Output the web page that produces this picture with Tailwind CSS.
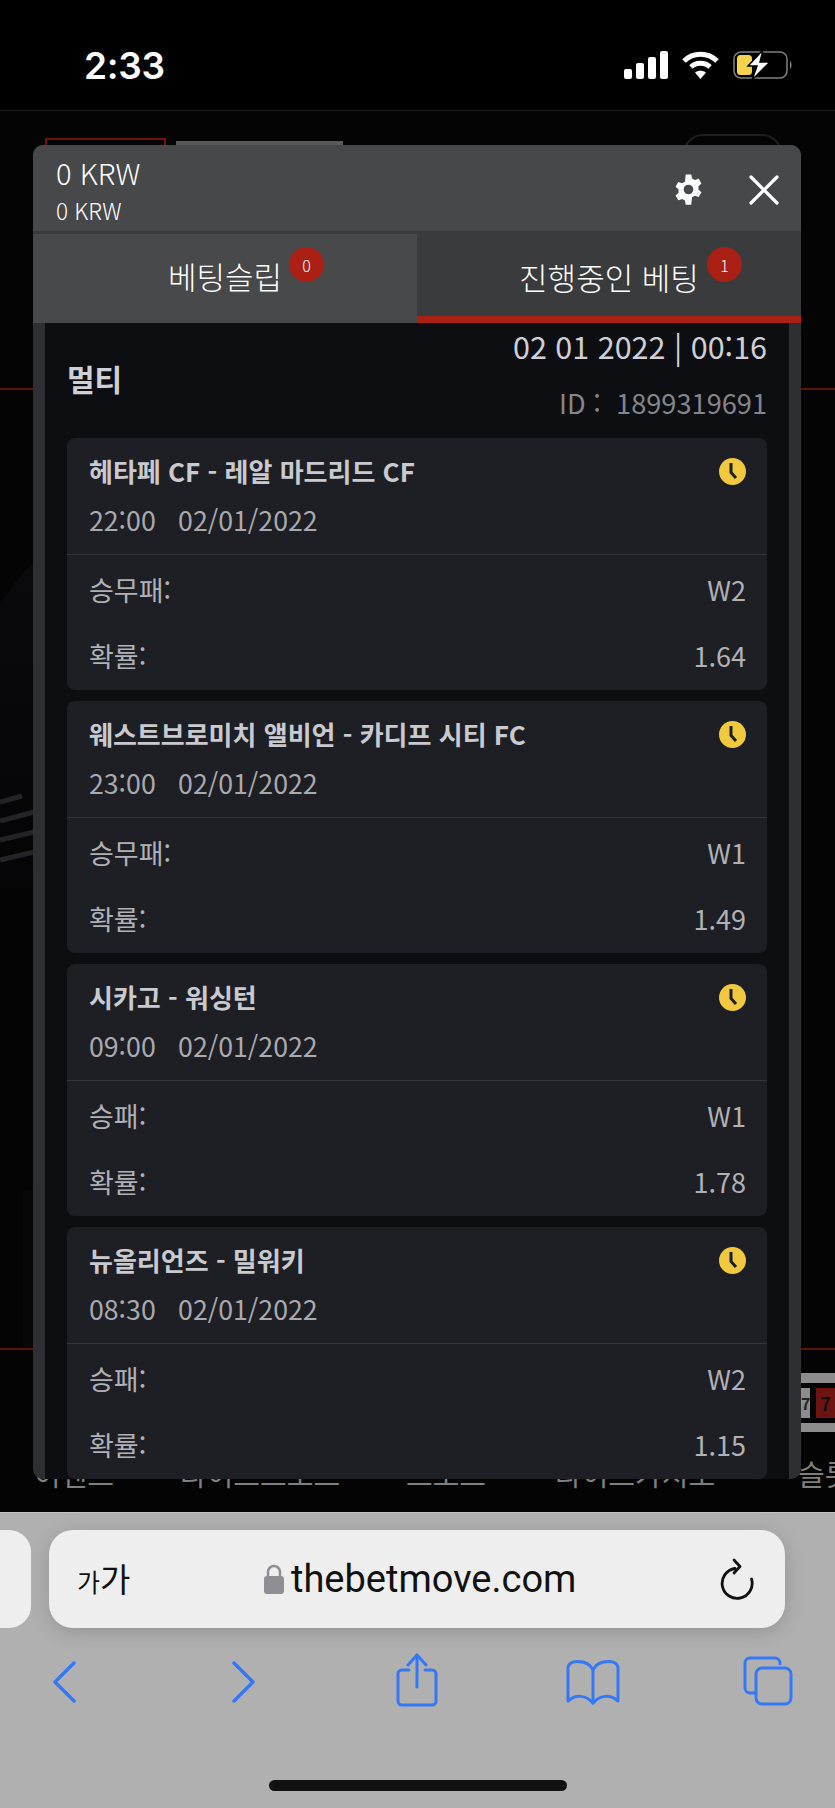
<!DOCTYPE html>
<html lang="ko">
<head>
<meta charset="utf-8">
<title>Betting slip</title>
<script src="https://cdn.jsdelivr.net/npm/@tailwindcss/browser@4"></script>
</head>
<body class="m-0 bg-black">
<div class="relative w-[835px] h-[1808px] overflow-hidden flex flex-col bg-black font-['Noto_Sans_CJK_KR','Noto_Sans',sans-serif]">

  <!-- status bar -->
  <div class="h-[110px] shrink-0 flex items-start justify-between bg-black pt-[45px] pl-[84px] pr-[42px]">
    <span class="font-['Inter',sans-serif] font-semibold text-[37px] leading-[42px] tracking-[-0.3px] text-white">2:33</span>
    <div class="flex items-start gap-[14px] pt-[6px]">
      <svg width="44" height="28" viewBox="0 0 44 28" fill="#fff"><rect x="0" y="18" width="8" height="10" rx="2"/><rect x="12" y="12" width="8" height="16" rx="2"/><rect x="24" y="6" width="8" height="22" rx="2"/><rect x="36" y="0" width="8" height="28" rx="2"/></svg>
      <svg width="37" height="28" viewBox="0 0 37 28" fill="none" stroke="#fff" stroke-width="5"><path d="M2 10 C11 1 26 1 35 10"/><path d="M9 16 C14 11 23 11 28 16"/><path d="M18.500 28 L13 21.500 C16 19 21 19 24 21.500 Z" fill="#fff" stroke="none"/></svg>
      <svg width="60" height="30" viewBox="0 0 60 30" fill="none" class="-mt-[1px]"><rect x="1" y="2" width="53" height="26" rx="7" stroke="#808080" stroke-width="1.500"/><path d="M57 11 C59 12 59 18 57 19 Z" fill="#808080"/><rect x="4" y="5" width="15" height="20" rx="3.500" fill="#f7d24c"/><path d="M30 0 L15 16 L24 16 L19 30 L37 12 L27 12 Z" fill="#fff" stroke="#000" stroke-width="1.500"/></svg>
    </div>
  </div>

  <!-- page behind the modal -->
  <div class="relative h-[1402px] shrink-0 flex flex-col bg-[#040405] border-t border-[#1b1b1b]">
    <div class="h-[277px] shrink-0 flex justify-between items-start pt-[23px] pl-[45px] pr-[53px]">
      <div class="flex items-start gap-[10px] pt-[4px]">
        <div class="w-[121px] h-[20px] border-2 border-[#6d120c]"></div>
        <div class="w-[167px] h-[20px] mt-[3px] bg-[#58585a]"></div>
      </div>
      <div class="w-[99px] h-[40px] rounded-[20px] border-2 border-[#1e1e1e]"></div>
    </div>
    <div class="h-[2px] shrink-0 bg-[#5d0f0a]"></div>
    <div class="h-[958px] shrink-0 relative overflow-hidden">
      <svg class="absolute left-0 top-[130px]" width="60" height="400" viewBox="0 0 60 400" fill="none">
        <defs><linearGradient id="sw" x1="0" y1="0" x2="0" y2="1"><stop offset="0" stop-color="#0a0a0d"/><stop offset="1" stop-color="#040405"/></linearGradient></defs>
        <path d="M0 85 C12 65 24 50 34 43 L34 400 L0 400 Z" fill="url(#sw)"/>
        <g stroke="#242428" stroke-width="5"><path d="M0 282 L22 276"/><path d="M0 301 L34 292"/><path d="M0 320 L34 312"/><path d="M0 340 L34 332"/></g>
      </svg>
      <div class="absolute left-[23px] top-[800px] w-[12px] h-[158px] bg-[#070707]"></div>
    </div>
    <div class="h-[2px] shrink-0 bg-[#5d0f0a]"></div>
    <div class="relative flex-1">
      <div class="absolute left-[801px] top-[23px] w-[34px] flex flex-col gap-[5px]">
        <div class="h-[10px] bg-[#8c8c8c]"></div>
        <div class="h-[30px] flex gap-[6px]">
          <div class="w-[9px] bg-[#8c8c8c] text-[16px] leading-[30px] font-bold text-[#222]">7</div>
          <div class="w-[19px] bg-[#6d1410] text-center text-[18px] leading-[30px] font-bold text-[#111]">7</div>
        </div>
        <div class="h-[9px] bg-[#8c8c8c]"></div>
      </div>
      <div class="absolute left-0 right-0 top-[106px] flex pl-[34px] whitespace-nowrap text-[29px] leading-[34px] text-[#7f7f7f]">
        <span class="w-[146px] shrink-0">이벤트</span><span class="w-[226px] shrink-0">라이브스포츠</span><span class="w-[149px] shrink-0">스포츠</span><span class="w-[243px] shrink-0">라이브카지노</span><span class="shrink-0">슬롯</span>
      </div>
    </div>

    <!-- modal -->
    <div class="absolute left-[33px] top-[34px] w-[768px] h-[1334px] rounded-[10px] overflow-hidden flex flex-col bg-[#2d2f33]">
      <div class="h-[86px] shrink-0 bg-[#46484a] flex items-start justify-between pl-[23px] pr-[22px] text-white">
        <div class="pt-[7px]">
          <div class="text-[29px] leading-[40px] font-light">0 KRW</div>
          <div class="text-[22.500px] leading-[30px] mt-[3px] font-light">0 KRW</div>
        </div>
        <div class="flex items-center gap-[44px] pt-[28px]">
          <svg width="33" height="33" viewBox="0 0 24 24" fill="#fff"><path fill-rule="evenodd" d="M10 1h4l.6 3a8 8 0 0 1 2 1.100l2.800-1 2 3.500-2.200 2a8 8 0 0 1 0 2.400l2.200 2-2 3.500-2.800-1a8 8 0 0 1-2 1.100L14 23h-4l-.6-3a8 8 0 0 1-2-1.100l-2.800 1-2-3.500 2.200-2a8 8 0 0 1 0-2.400l-2.200-2 2-3.500 2.800 1a8 8 0 0 1 2-1.100zM12 8.500a3.500 3.500 0 1 0 0 7 3.500 3.500 0 0 0 0-7z"/></svg>
          <svg width="30" height="30" viewBox="0 0 30 30" fill="none" stroke="#fff" stroke-width="3.200" stroke-linecap="round"><path d="M2 2 L28 28"/><path d="M28 2 L2 28"/></svg>
        </div>
      </div>
      <div class="h-[92px] shrink-0 flex bg-[#3a3b3d]">
        <div class="relative w-[384px] mt-[3px] bg-[#48494b] flex items-center justify-center text-white text-[31px] leading-[44px] font-light">
          <span class="-mt-[6px]">베팅슬립</span>
          <span class="absolute left-[256px] top-[13px] w-[35px] h-[35px] rounded-full bg-[#ab2015] flex items-center justify-center text-[16px] leading-[20px] font-light">0</span>
        </div>
        <div class="relative flex-1 border-b-[7px] border-[#ab2015] flex items-center justify-center text-white text-[31px] leading-[44px] font-light">
          <span class="pt-[6px]">진행중인 베팅</span>
          <span class="absolute left-[290px] top-[16px] w-[35px] h-[35px] rounded-full bg-[#ab2015] flex items-center justify-center text-[16px] leading-[20px] font-light">1</span>
        </div>
      </div>
      <div class="flex-1 mx-[12px] bg-[#0d0e11] pl-[22px] pr-[22px] flex flex-col min-h-0">
        <div class="h-[115px] shrink-0 flex justify-between items-start">
          <div class="mt-[35px] text-[30px] leading-[40px] font-semibold text-[#cfd0d5]">멀티</div>
          <div class="text-right">
            <div class="text-[30.500px] leading-[46px] font-normal text-[#cfd0d5]">02 01 2022 | 00:16</div>
            <div class="mt-[14px] text-[27.200px] leading-[38px] font-normal text-[#85868c]">ID :&nbsp; 1899319691</div>
          </div>
        </div>
        <div class="flex flex-col gap-[11px]">

          <div class="h-[252px] shrink-0 rounded-[8px] bg-[#1e1f24]">
            <div class="h-[117px] border-b border-[#34353a] pl-[22px] pr-[21px]">
              <div class="h-[66px] flex items-center justify-between">
                <span class="text-[26px] leading-[34px] font-semibold text-[#c9cad0]">헤타페 CF - 레알 마드리드 CF</span>
                <svg width="27" height="27" viewBox="0 0 27 27"><circle cx="13.500" cy="13.500" r="13.500" fill="#f0c93f"/><path d="M12 5 V14.500 L17 20" fill="none" stroke="#1e1f24" stroke-width="3"/></svg>
              </div>
              <div class="h-[32px] flex items-center text-[26.700px] leading-[32px] font-normal text-[#a9aab0]">22:00&nbsp;&nbsp; 02/01/2022</div>
            </div>
            <div class="pt-[2px] pl-[22px] pr-[21px] text-[27px] leading-[36px] font-normal text-[#b0b1b7]">
              <div class="h-[66px] flex items-center justify-between"><span>승무패:</span><span>W2</span></div>
              <div class="h-[66px] flex items-center justify-between"><span>확률:</span><span>1.64</span></div>
            </div>
          </div>

          <div class="h-[252px] shrink-0 rounded-[8px] bg-[#1e1f24]">
            <div class="h-[117px] border-b border-[#34353a] pl-[22px] pr-[21px]">
              <div class="h-[66px] flex items-center justify-between">
                <span class="text-[26px] leading-[34px] font-semibold text-[#c9cad0]">웨스트브로미치 앨비언 - 카디프 시티 FC</span>
                <svg width="27" height="27" viewBox="0 0 27 27"><circle cx="13.500" cy="13.500" r="13.500" fill="#f0c93f"/><path d="M12 5 V14.500 L17 20" fill="none" stroke="#1e1f24" stroke-width="3"/></svg>
              </div>
              <div class="h-[32px] flex items-center text-[26.700px] leading-[32px] font-normal text-[#a9aab0]">23:00&nbsp;&nbsp; 02/01/2022</div>
            </div>
            <div class="pt-[2px] pl-[22px] pr-[21px] text-[27px] leading-[36px] font-normal text-[#b0b1b7]">
              <div class="h-[66px] flex items-center justify-between"><span>승무패:</span><span>W1</span></div>
              <div class="h-[66px] flex items-center justify-between"><span>확률:</span><span>1.49</span></div>
            </div>
          </div>

          <div class="h-[252px] shrink-0 rounded-[8px] bg-[#1e1f24]">
            <div class="h-[117px] border-b border-[#34353a] pl-[22px] pr-[21px]">
              <div class="h-[66px] flex items-center justify-between">
                <span class="text-[26px] leading-[34px] font-semibold text-[#c9cad0]">시카고 - 워싱턴</span>
                <svg width="27" height="27" viewBox="0 0 27 27"><circle cx="13.500" cy="13.500" r="13.500" fill="#f0c93f"/><path d="M12 5 V14.500 L17 20" fill="none" stroke="#1e1f24" stroke-width="3"/></svg>
              </div>
              <div class="h-[32px] flex items-center text-[26.700px] leading-[32px] font-normal text-[#a9aab0]">09:00&nbsp;&nbsp; 02/01/2022</div>
            </div>
            <div class="pt-[2px] pl-[22px] pr-[21px] text-[27px] leading-[36px] font-normal text-[#b0b1b7]">
              <div class="h-[66px] flex items-center justify-between"><span>승패:</span><span>W1</span></div>
              <div class="h-[66px] flex items-center justify-between"><span>확률:</span><span>1.78</span></div>
            </div>
          </div>

          <div class="h-[252px] shrink-0 rounded-[8px] bg-[#1e1f24]">
            <div class="h-[117px] border-b border-[#34353a] pl-[22px] pr-[21px]">
              <div class="h-[66px] flex items-center justify-between">
                <span class="text-[26px] leading-[34px] font-semibold text-[#c9cad0]">뉴올리언즈 - 밀워키</span>
                <svg width="27" height="27" viewBox="0 0 27 27"><circle cx="13.500" cy="13.500" r="13.500" fill="#f0c93f"/><path d="M12 5 V14.500 L17 20" fill="none" stroke="#1e1f24" stroke-width="3"/></svg>
              </div>
              <div class="h-[32px] flex items-center text-[26.700px] leading-[32px] font-normal text-[#a9aab0]">08:30&nbsp;&nbsp; 02/01/2022</div>
            </div>
            <div class="pt-[2px] pl-[22px] pr-[21px] text-[27px] leading-[36px] font-normal text-[#b0b1b7]">
              <div class="h-[66px] flex items-center justify-between"><span>승패:</span><span>W2</span></div>
              <div class="h-[66px] flex items-center justify-between"><span>확률:</span><span>1.15</span></div>
            </div>
          </div>

        </div>
      </div>
    </div>
  </div>

  <!-- safari toolbar -->
  <div class="relative flex-1 bg-[#b0b0b0] border-t border-[#c4c4c4] pt-[17px]">
    <div class="absolute left-0 top-[17px] w-[31px] h-[98px] rounded-r-[22px] bg-[#eeeeee]"></div>
    <div class="ml-[49px] w-[736px] h-[98px] rounded-[24px] bg-[#eeeeee] shadow-[0_4px_20px_rgba(0,0,0,0.16)] flex items-center pl-[28px] pr-[30px]">
      <span class="w-[187px] shrink-0 text-[33px] leading-[40px] text-[#111] flex items-baseline"><span class="text-[25px]">가</span><span>가</span></span>
      <div class="flex items-center gap-[7px]">
        <svg width="20" height="30" viewBox="0 0 20 30"><path d="M4 13 V8 a6 6 0 0 1 12 0 V13" fill="none" stroke="#8e8e93" stroke-width="2.500"/><rect x="0" y="12" width="20" height="18" rx="3" fill="#8e8e93"/></svg>
        <span class="font-['Roboto',sans-serif] text-[38px] leading-[46px] text-[#111]">thebetmove.com</span>
      </div>
      <svg class="ml-auto" width="36" height="42" viewBox="0 0 36 42" fill="none" stroke="#111" stroke-width="2.800" stroke-linecap="round" stroke-linejoin="round"><path d="M16 10.500 A15 15 0 1 0 32.500 21"/><path d="M15 2 L21 8.500 L15 15"/></svg>
    </div>
    <div class="mt-[25px] flex items-start pl-[52px] h-[54px]">
      <svg class="mt-[8px]" width="24" height="42" viewBox="0 0 24 42" fill="none" stroke="#3478f6" stroke-width="3.400" stroke-linecap="round" stroke-linejoin="round"><path d="M22 2 L3 21 L22 40"/></svg>
      <svg class="mt-[8px] ml-[156px]" width="24" height="42" viewBox="0 0 24 42" fill="none" stroke="#3478f6" stroke-width="3.400" stroke-linecap="round" stroke-linejoin="round"><path d="M2 2 L21 21 L2 40"/></svg>
      <svg class="ml-[140px]" width="42" height="54" viewBox="0 0 42 54" fill="none" stroke="#3478f6" stroke-width="3" stroke-linecap="round" stroke-linejoin="round"><path d="M13 17 H6 a4 4 0 0 0-4 4 V48 a4 4 0 0 0 4 4 H36 a4 4 0 0 0 4-4 V21 a4 4 0 0 0-4-4 H29"/><path d="M21 34 V2"/><path d="M12 12 L21 2 L30 12"/></svg>
      <svg class="mt-[7px] ml-[128px]" width="54" height="45" viewBox="0 0 54 45" fill="none" stroke="#3478f6" stroke-width="3" stroke-linecap="round" stroke-linejoin="round"><path d="M27 10 C24 3 17 1.500 11 1.500 C6 1.500 2 4 2 8 V41 C10 34 20 35 27 43 C34 35 44 34 52 41 V8 C52 4 48 1.500 43 1.500 C37 1.500 30 3 27 10 Z"/><path d="M27 10 V43"/></svg>
      <svg class="mt-[3px] ml-[123px]" width="50" height="50" viewBox="0 0 50 50" fill="none" stroke="#3478f6" stroke-width="3"><path d="M37 9 V7 a5 5 0 0 0-5-5 H7 a5 5 0 0 0-5 5 V32 a5 5 0 0 0 5 5 H12"/><rect x="13" y="12" width="35" height="36" rx="6"/></svg>
    </div>
    <div class="absolute left-[269px] top-[267px] w-[298px] h-[11px] rounded-full bg-[#111]"></div>
  </div>
</div>
</body>
</html>
